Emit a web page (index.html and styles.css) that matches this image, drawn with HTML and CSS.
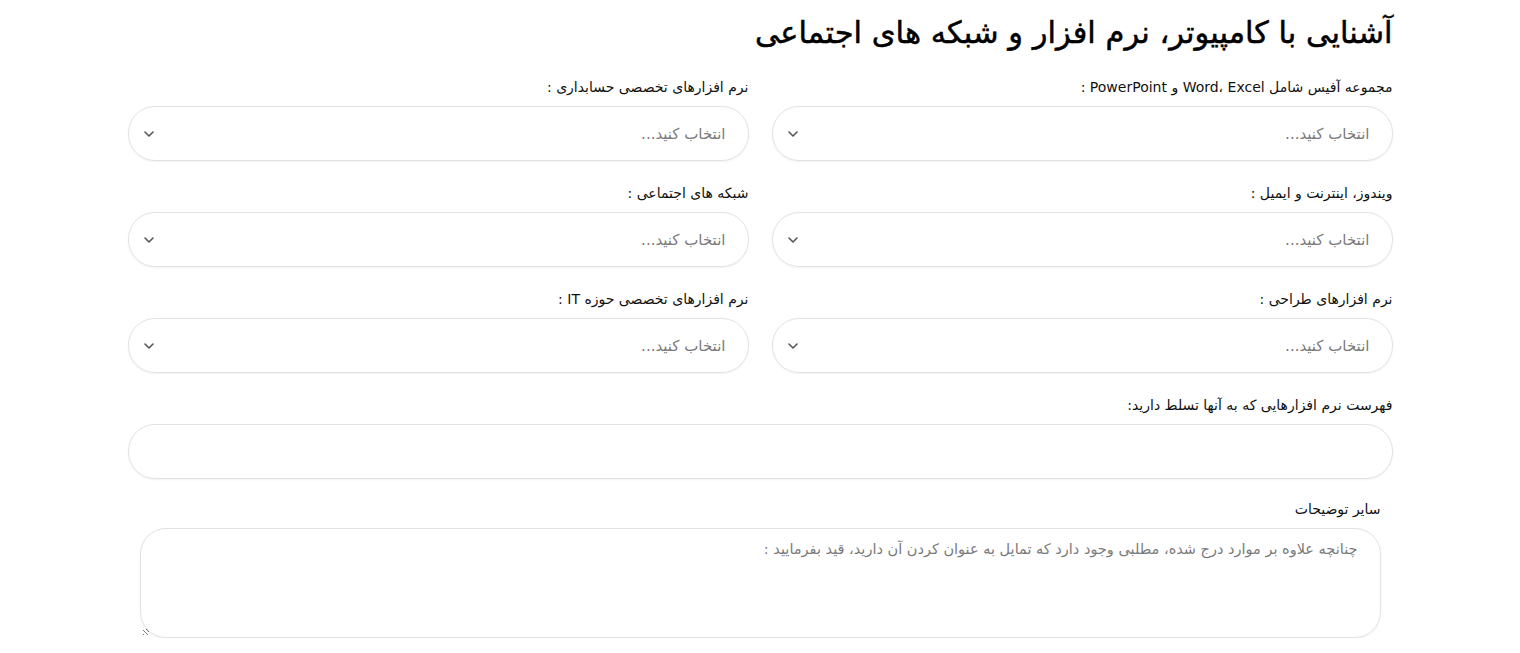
FILE: index.html
```html
<!DOCTYPE html>
<html lang="fa" dir="rtl">
<head>
    <meta charset="UTF-8">
    <meta name="viewport" content="width=device-width, initial-scale=1.0">
    <title>آشنایی با کامپیوتر</title>
    <link rel="stylesheet" href="styles.css">
</head>
<body>
    <div class="form-wrap">
        <h1 class="form-title">آشنایی با کامپیوتر، نرم افزار و شبکه های اجتماعی</h1>

        <div class="field-grid">
            <div class="field">
                <label class="field-label">مجموعه آفیس شامل Word، Excel و PowerPoint :</label>
                <div class="select-box">
                    <span class="select-placeholder">انتخاب کنید...</span>
                    <svg class="select-arrow" width="12" height="8" viewBox="0 0 12 8"><path d="M2 2l4 4 4-4" fill="none" stroke="#555" stroke-width="1.6" stroke-linecap="round" stroke-linejoin="round"/></svg>
                </div>
            </div>
            <div class="field">
                <label class="field-label">نرم افزارهای تخصصی حسابداری :</label>
                <div class="select-box">
                    <span class="select-placeholder">انتخاب کنید...</span>
                    <svg class="select-arrow" width="12" height="8" viewBox="0 0 12 8"><path d="M2 2l4 4 4-4" fill="none" stroke="#555" stroke-width="1.6" stroke-linecap="round" stroke-linejoin="round"/></svg>
                </div>
            </div>
            <div class="field">
                <label class="field-label">ویندوز، اینترنت و ایمیل :</label>
                <div class="select-box">
                    <span class="select-placeholder">انتخاب کنید...</span>
                    <svg class="select-arrow" width="12" height="8" viewBox="0 0 12 8"><path d="M2 2l4 4 4-4" fill="none" stroke="#555" stroke-width="1.6" stroke-linecap="round" stroke-linejoin="round"/></svg>
                </div>
            </div>
            <div class="field">
                <label class="field-label">شبکه های اجتماعی :</label>
                <div class="select-box">
                    <span class="select-placeholder">انتخاب کنید...</span>
                    <svg class="select-arrow" width="12" height="8" viewBox="0 0 12 8"><path d="M2 2l4 4 4-4" fill="none" stroke="#555" stroke-width="1.6" stroke-linecap="round" stroke-linejoin="round"/></svg>
                </div>
            </div>
            <div class="field">
                <label class="field-label">نرم افزارهای طراحی :</label>
                <div class="select-box">
                    <span class="select-placeholder">انتخاب کنید...</span>
                    <svg class="select-arrow" width="12" height="8" viewBox="0 0 12 8"><path d="M2 2l4 4 4-4" fill="none" stroke="#555" stroke-width="1.6" stroke-linecap="round" stroke-linejoin="round"/></svg>
                </div>
            </div>
            <div class="field">
                <label class="field-label">نرم افزارهای تخصصی حوزه IT :</label>
                <div class="select-box">
                    <span class="select-placeholder">انتخاب کنید...</span>
                    <svg class="select-arrow" width="12" height="8" viewBox="0 0 12 8"><path d="M2 2l4 4 4-4" fill="none" stroke="#555" stroke-width="1.6" stroke-linecap="round" stroke-linejoin="round"/></svg>
                </div>
            </div>
            <div class="field field-full">
                <label class="field-label">فهرست نرم افزارهایی که به آنها تسلط دارید:</label>
                <div class="text-box"></div>
            </div>
        </div>

        <div class="notes">
            <label class="field-label notes-label">سایر توضیحات</label>
            <div class="notes-box">
                <span class="notes-placeholder">چنانچه علاوه بر موارد درج شده، مطلبی وجود دارد که تمایل به عنوان کردن آن دارید، قید بفرمایید :</span>
                <span class="resize-grip"></span>
            </div>
        </div>
    </div>
</body>
</html>
```

FILE: styles.css
```css
body {
    margin: 0;
    background: #fff;
    font-family: "DejaVu Sans", "Noto Sans", sans-serif;
    color: #111;
}

.form-wrap {
    max-width: 1265px;
    margin: 0 auto;
    padding-top: 9px;
}

.form-title {
    margin: 0 0 21px;
    font-size: 30.5px;
    font-weight: 500;
    -webkit-text-stroke: 0.5px #000;
    line-height: 48px;
    color: #000;
}

.field-grid {
    display: grid;
    grid-template-columns: 1fr 1fr;
    column-gap: 23px;
    row-gap: 23px;
}

.field-full {
    grid-column: 1 / -1;
}

.field-label {
    display: block;
    font-size: 14px;
    line-height: 18px;
    color: #111;
    margin-bottom: 10px;
}

.select-box,
.text-box {
    box-sizing: border-box;
    height: 55px;
    border: 1px solid #e2e2e2;
    border-radius: 27px;
    box-shadow: 0 1px 2px rgba(0,0,0,0.06);
    display: flex;
    align-items: center;
    justify-content: space-between;
    padding: 0 22px 0 14px;
}

.select-placeholder {
    font-size: 15px;
    color: #7a7a7a;
}

.select-arrow {
    display: block;
}

.notes {
    margin-top: 21px;
    padding: 0 12px;
}

.notes-box {
    position: relative;
    box-sizing: border-box;
    height: 110px;
    border: 1px solid #e2e2e2;
    border-radius: 26px;
    box-shadow: 0 1px 2px rgba(0,0,0,0.06);
    padding: 10px 22px;
}

.notes-placeholder {
    font-size: 14.5px;
    color: #7a7a7a;
}

.resize-grip {
    position: absolute;
    left: 2px;
    bottom: 2px;
    width: 6px;
    height: 6px;
    background: repeating-linear-gradient(45deg, #777 0 1px, transparent 1px 3px);
}
```
